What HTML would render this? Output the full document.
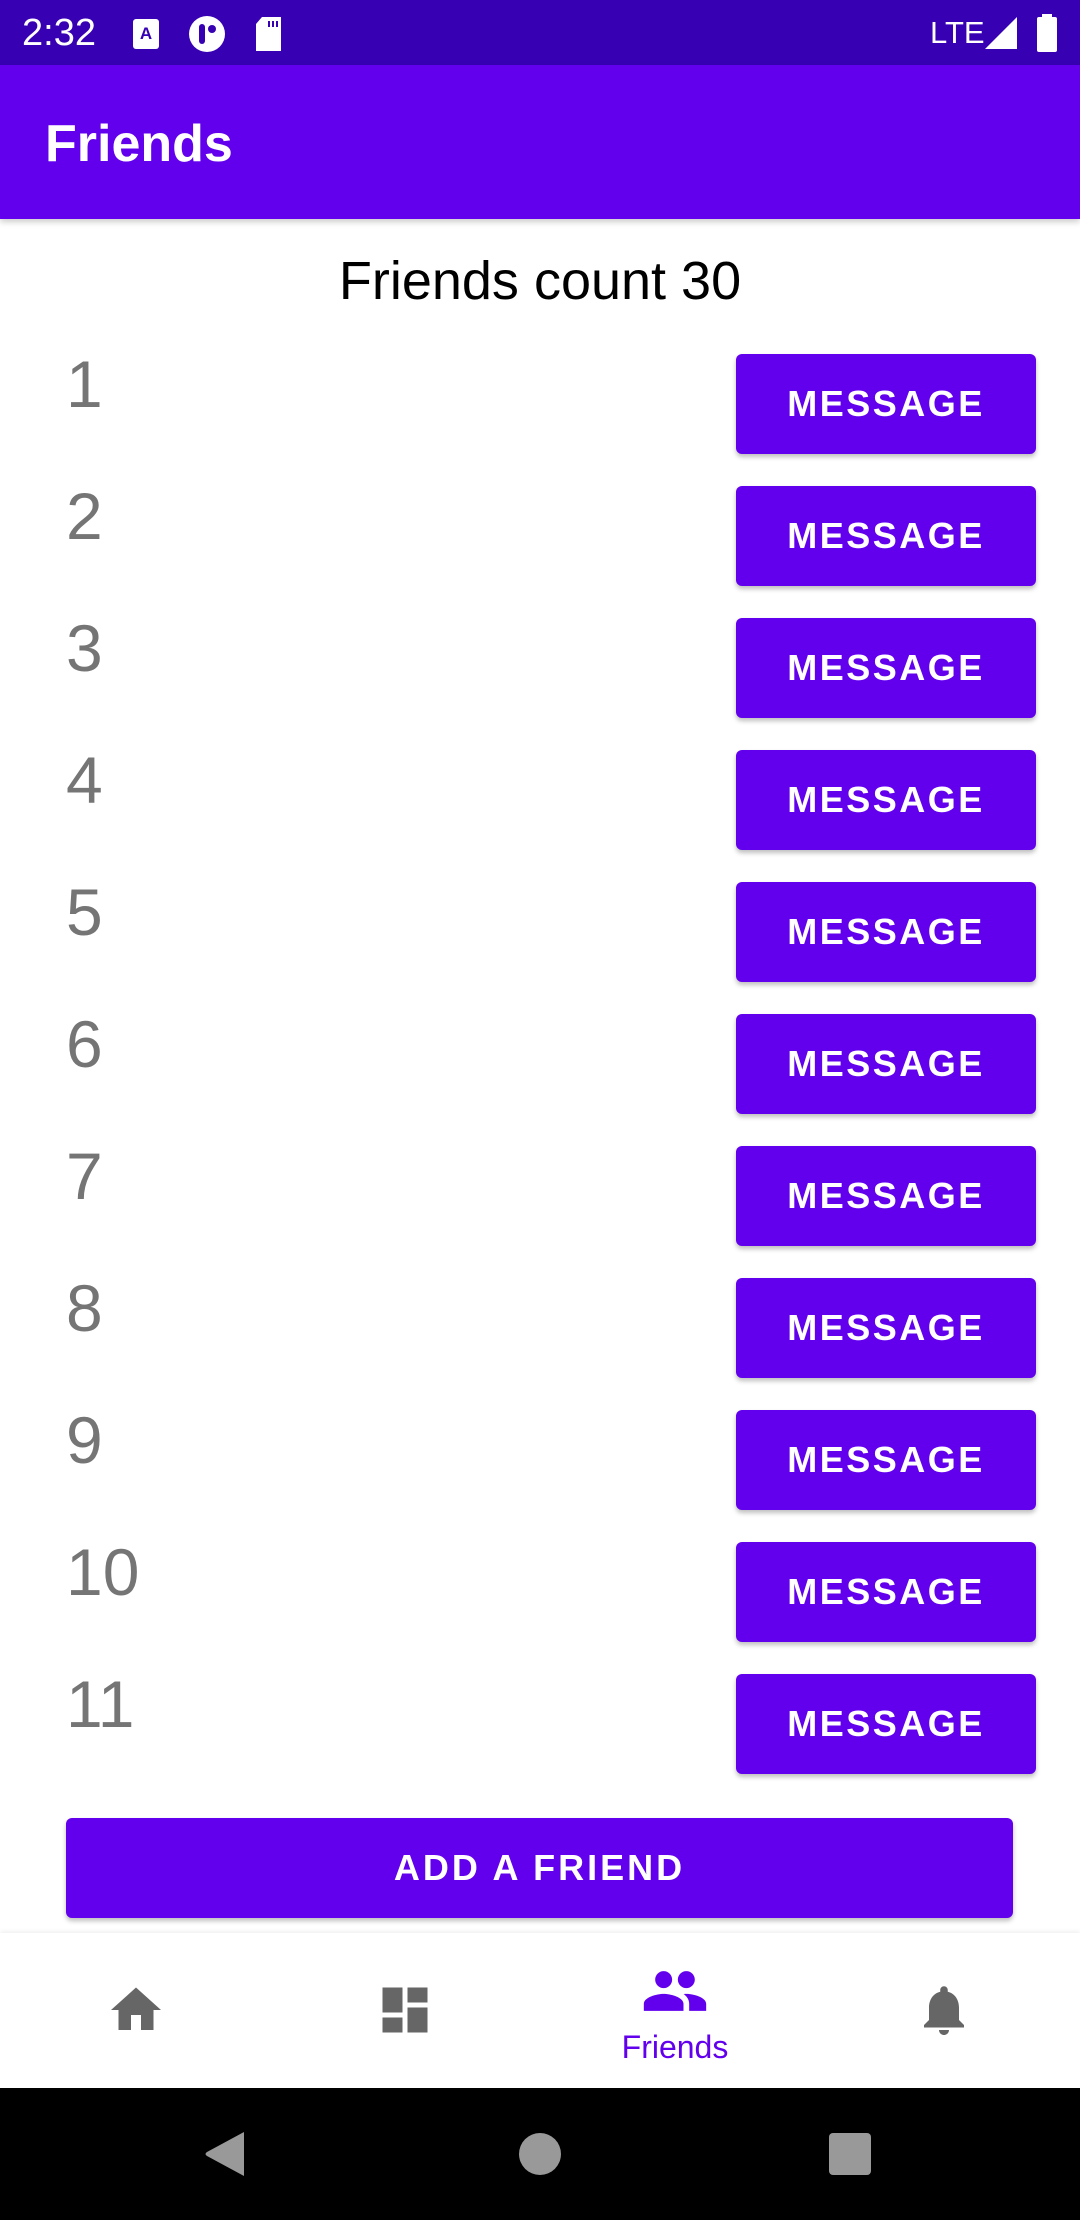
<!DOCTYPE html>
<html><head><meta charset="utf-8"><style>
*{margin:0;padding:0;box-sizing:border-box}
body{width:1080px;height:2220px;position:relative;background:#fff;font-family:"Liberation Sans",sans-serif;overflow:hidden}
.sb{position:absolute;left:0;top:0;width:1080px;height:65px;background:#3700b3;color:#fff}
.ab{position:absolute;left:0;top:65px;width:1080px;height:154px;background:#6200ee;box-shadow:0 3px 6px rgba(0,0,0,.2)}
.ab span{position:absolute;left:45px;top:49px;font-size:52px;color:#fff;font-weight:bold}
.cnt{position:absolute;top:250px;width:1080px;text-align:center;font-size:54px;color:#000}
.num{position:absolute;left:66px;font-size:66px;color:#757575}
.btn{position:absolute;left:736px;width:300px;height:100px;background:#6200ee;border-radius:6px;box-shadow:0 3px 5px rgba(0,0,0,.25);color:#fff;font-size:36px;font-weight:bold;letter-spacing:2.5px;text-align:center;line-height:100px}
.add{position:absolute;left:66px;top:1818px;width:947px;height:100px;background:#6200ee;border-radius:6px;box-shadow:0 3px 5px rgba(0,0,0,.25);color:#fff;font-size:36px;font-weight:bold;letter-spacing:3px;text-align:center;line-height:100px}
.bn{position:absolute;left:0;top:1933px;width:1080px;height:155px;background:#fff;box-shadow:0 -2px 4px rgba(0,0,0,.06)}
.nav{position:absolute;left:0;top:2088px;width:1080px;height:132px;background:#000}
</style></head><body>
<div class="sb">
<span style="position:absolute;left:22px;top:12px;font-size:38px">2:32</span>
<svg style="position:absolute;left:132px;top:18px" width="30" height="32" viewBox="0 0 30 32"><rect x="1" y="1" width="26" height="30" rx="3" fill="#fff"/><text x="14" y="21" font-size="17" font-family="Liberation Sans" font-weight="bold" text-anchor="middle" fill="#3700b3">A</text></svg>
<svg style="position:absolute;left:187px;top:14px" width="40" height="40" viewBox="0 0 40 40"><circle cx="20" cy="20" r="18" fill="#fff"/><rect x="12" y="10" width="6" height="20" rx="3" fill="#3700b3"/><circle cx="25" cy="15" r="4" fill="#3700b3"/></svg>
<svg style="position:absolute;left:254px;top:16px" width="30" height="36" viewBox="0 0 30 36"><path d="M8 1H27V35H2V8Z" fill="#fff"/><rect x="14" y="5" width="2" height="6" fill="#3700b3"/><rect x="18" y="5" width="2" height="6" fill="#3700b3"/><rect x="22" y="5" width="2" height="6" fill="#3700b3"/></svg>
<span style="position:absolute;left:930px;top:15px;font-size:31px">LTE</span>
<svg style="position:absolute;left:984px;top:16px" width="34" height="34" viewBox="0 0 34 34"><path d="M33 1V33H1Z" fill="#fff"/></svg>
<svg style="position:absolute;left:1036px;top:14px" width="22" height="38" viewBox="0 0 22 38"><rect x="6" y="0" width="10" height="4" fill="#fff"/><rect x="1" y="3" width="20" height="35" rx="2" fill="#fff"/></svg>
</div>
<div class="ab"><span>Friends</span></div>
<div class="cnt">Friends count 30</div>

<div class="num" style="top:346px">1</div><div class="btn" style="top:354px">MESSAGE</div>
<div class="num" style="top:478px">2</div><div class="btn" style="top:486px">MESSAGE</div>
<div class="num" style="top:610px">3</div><div class="btn" style="top:618px">MESSAGE</div>
<div class="num" style="top:742px">4</div><div class="btn" style="top:750px">MESSAGE</div>
<div class="num" style="top:874px">5</div><div class="btn" style="top:882px">MESSAGE</div>
<div class="num" style="top:1006px">6</div><div class="btn" style="top:1014px">MESSAGE</div>
<div class="num" style="top:1138px">7</div><div class="btn" style="top:1146px">MESSAGE</div>
<div class="num" style="top:1270px">8</div><div class="btn" style="top:1278px">MESSAGE</div>
<div class="num" style="top:1402px">9</div><div class="btn" style="top:1410px">MESSAGE</div>
<div class="num" style="top:1534px">10</div><div class="btn" style="top:1542px">MESSAGE</div>
<div class="num" style="top:1666px">11</div><div class="btn" style="top:1674px">MESSAGE</div>

<div class="add">ADD A FRIEND</div>

<div class="bn">
<svg style="position:absolute;left:106px;top:47px" width="60" height="60" viewBox="0 0 24 24"><path d="M10 20v-6h4v6h5v-8h3L12 3 2 12h3v8z" fill="#666"/></svg>
<svg style="position:absolute;left:375px;top:47px" width="60" height="60" viewBox="0 0 24 24"><path d="M3 13h8V3H3v10zm0 8h8v-6H3v6zm10 0h8V11h-8v10zm0-18v6h8V3h-8z" fill="#666"/></svg>
<svg style="position:absolute;left:641px;top:24px" width="68" height="68" viewBox="0 0 24 24"><path d="M16 11c1.66 0 2.99-1.34 2.99-3S17.66 5 16 5c-1.660 0-3 1.34-3 3s1.34 3 3 3zm-8 0c1.66 0 2.99-1.34 2.99-3S9.66 5 8 5C6.34 5 5 6.34 5 8s1.34 3 3 3zm0 2c-2.33 0-7 1.170-7 3.5V19h14v-2.5c0-2.33-4.67-3.5-7-3.5zm8 0c-.29 0-.62.02-.97.05 1.16.84 1.970 1.97 1.97 3.45V19h6v-2.5c0-2.33-4.67-3.5-7-3.5z" fill="#6200ee"/></svg>
<div style="position:absolute;left:575px;top:96px;width:200px;text-align:center;font-size:32px;color:#6200ee">Friends</div>
<svg style="position:absolute;left:914px;top:47px" width="60" height="60" viewBox="0 0 24 24"><path d="M12 22c1.1 0 2-.9 2-2h-4c0 1.1.89 2 2 2zm6-6v-5c0-3.07-1.64-5.64-4.5-6.32V4c0-.83-.67-1.5-1.5-1.5s-1.5.67-1.5 1.5v.68C7.63 5.36 6 7.92 6 11v5l-2 2v1h16v-1l-2-2z" fill="#666"/></svg>
</div>

<div class="nav">
<svg style="position:absolute;left:204px;top:42px" width="42" height="48" viewBox="0 0 42 48"><path d="M40 2V46L3 26Q0 24 3 22Z" fill="#999"/></svg>
<div style="position:absolute;left:519px;top:45px;width:42px;height:42px;border-radius:50%;background:#999"></div>
<div style="position:absolute;left:829px;top:45px;width:42px;height:42px;border-radius:4px;background:#999"></div>
</div>
</body></html>
